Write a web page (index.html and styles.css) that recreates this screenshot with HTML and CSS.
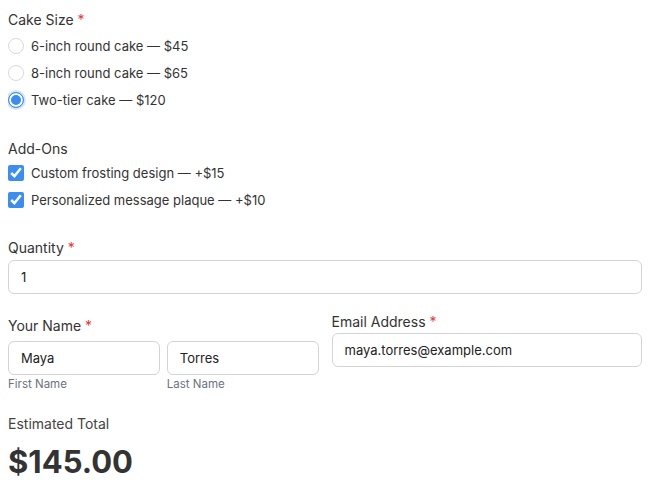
FILE: index.html
```html
<!DOCTYPE html>
<html lang="en">

<head>
    <meta charset="UTF-8">
    <meta name="viewport" content="width=device-width, initial-scale=1.0">
    <title>Cake Order</title>
    <link rel="stylesheet" href="styles.css">
</head>

<body>
    <form id="orderForm">

        <!-- Cake size -->
        <div class="field" id="sizeField">
            <div class="label">Cake Size <span class="req">*</span></div>
            <label class="option">
                <input type="radio" name="size" value="45"> 6-inch round cake &mdash; $45
            </label>
            <label class="option">
                <input type="radio" name="size" value="65"> 8-inch round cake &mdash; $65
            </label>
            <label class="option">
                <input type="radio" name="size" value="120" checked> Two-tier cake &mdash; $120
            </label>
        </div>

        <!-- Add-ons -->
        <div class="field" id="addonField">
            <div class="label">Add-Ons</div>
            <label class="option">
                <input type="checkbox" name="frosting" checked> Custom frosting design &mdash; +$15
            </label>
            <label class="option">
                <input type="checkbox" name="plaque" checked> Personalized message plaque &mdash; +$10
            </label>
        </div>

        <div class="field" id="qtyField">
            <label class="label" for="quantity">Quantity <span class="req">*</span></label>
            <input class="textInput" type="text" id="quantity" value="1">
        </div>

        <div class="columns">
            <div class="field" id="nameField">
                <div class="label">Your Name <span class="req">*</span></div>
                <div class="nameRow">
                    <div class="namePart">
                        <input class="textInput" type="text" value="Maya">
                        <span class="subLabel">First Name</span>
                    </div>
                    <div class="namePart">
                        <input class="textInput" type="text" value="Torres">
                        <span class="subLabel">Last Name</span>
                    </div>
                </div>
            </div>

            <div class="field" id="emailField">
                <label class="label" for="email">Email Address <span class="req">*</span></label>
                <input class="textInput" type="text" id="email" value="maya.torres@example.com">
            </div>
        </div>

        <div id="total">
            <div class="label">Estimated Total</div>
            <div id="totalAmount">$145.00</div>
        </div>

    </form>
</body>

</html>
```

FILE: styles.css
```css
body {
    margin: 10px 8px 8px;
    font-family: Inter, "Noto Sans", sans-serif;
    font-size: 14px;
    color: #333;
    background-color: white;
}

.field {
    margin-bottom: 16px;
}

.label {
    display: block;
    line-height: 20px;
    color: #333;
    margin-bottom: 2px;
}

.req {
    color: #e53935;
}

.option {
    display: flex;
    align-items: center;
    height: 27px;
    gap: 7px;
    font-size: 13px;
}

.option input {
    margin: 0;
    width: 16px;
    height: 16px;
    accent-color: #3b8ef0;
}

/* custom radio so the empty ones stay light grey */
.option input[type="radio"] {
    appearance: none;
    box-sizing: border-box;
    border: 1px solid #d9d9de;
    border-radius: 50%;
    background-color: white;
}

.option input[type="radio"]:checked {
    border: 1px solid #3b8ef0;
    background-color: #3b8ef0;
    box-shadow: inset 0 0 0 2px white, 0 0 0 2px #d6e6fb;
}

#addonField .label {
    margin-top: 26px;
    margin-bottom: 0;
}

#addonField .option {
    height: 27px;
}

#qtyField .label {
    margin-top: 25px;
    margin-bottom: 2px;
}

.textInput {
    display: block;
    box-sizing: border-box;
    width: 100%;
    height: 34px;
    padding: 0 12px;
    border: 1px solid #d4d4d8;
    border-radius: 6px;
    font-family: inherit;
    font-size: 13px;
    color: #222;
}

.columns {
    display: grid;
    grid-template-columns: 1fr 1fr;
    gap: 13px;
    margin-top: 22px;
}

.nameRow {
    display: flex;
    gap: 7px;
    margin-top: 5px;
}

.namePart {
    flex: 1;
}

.subLabel {
    display: block;
    font-size: 11.5px;
    color: #6b7280;
    margin-top: 2px;
}

#emailField .label {
    margin-top: -4px;
    margin-bottom: 1px;
}

#total {
    margin-top: 7px;
}

#total .label {
    color: #444;
}

#totalAmount {
    font-size: 31px;
    font-weight: bold;
    color: #333;
    margin-top: 9px;
}
```
